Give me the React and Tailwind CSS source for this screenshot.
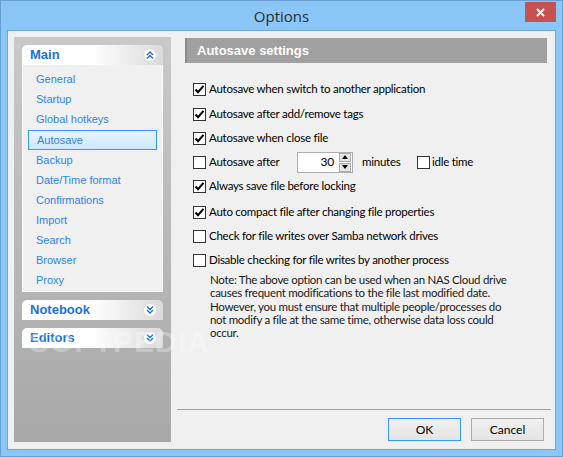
import React from 'react'

const ui = { fontFamily: 'Lato, "Open Sans", Arial, sans-serif' }
const tah = { fontFamily: '"Liberation Sans", Arial, sans-serif' }

function Check({ checked }) {
  return (
    <span className="w-[13px] h-[13px] shrink-0 border border-[#333333] bg-white flex items-center justify-center">
      {checked && (
        <svg width="11" height="11" viewBox="0 0 11 11">
          <path d="M1.5 5.5 L4 8.2 L9.5 1.8" fill="none" stroke="#000" strokeWidth="2" />
        </svg>
      )}
    </span>
  )
}

function Row({ checked, label, className = '' }) {
  return (
    <div className={`h-[24px] flex items-center gap-[3px] ${className}`}>
      <Check checked={checked} />
      <span className="text-[11.5px] tracking-[-0.25px] text-black whitespace-nowrap">{label}</span>
    </div>
  )
}

function Chevrons({ up }) {
  return (
    <span className="w-[14px] h-[14px] rounded-full bg-white border border-[#dcdcdc] flex items-center justify-center">
      <svg width="8" height="8" viewBox="0 0 8 8">
        {up ? (
          <path d="M1 4 L4 1 L7 4 M1 7.5 L4 4.5 L7 7.5" fill="none" stroke="#1c6fe0" strokeWidth="1.4" />
        ) : (
          <path d="M1 0.5 L4 3.5 L7 0.5 M1 4 L4 7 L7 4" fill="none" stroke="#1c6fe0" strokeWidth="1.4" />
        )}
      </svg>
    </span>
  )
}

function PanelHeader({ title, up }) {
  return (
    <div className="h-[20px] rounded-t-[5px] bg-gradient-to-r from-white via-white to-[#dadada] flex items-center justify-between pl-[8px] pr-[6px]">
      <span className="text-[13px] font-bold text-[#1c6fe0]" style={tah}>{title}</span>
      <Chevrons up={up} />
    </div>
  )
}

const items = ['General', 'Startup', 'Global hotkeys', 'Autosave', 'Backup', 'Date/Time format', 'Confirmations', 'Import', 'Search', 'Browser', 'Proxy']

export default function App() {
  return (
    <div className="w-[563px] h-[457px] bg-[#8ac7f8] border border-[#6a9fd2] flex flex-col relative overflow-hidden" style={ui}>
      {/* title bar */}
      <div className="h-[29px] relative flex items-center justify-center">
        <span className="text-[15px] text-[#2b2b2b] mt-[2px]" style={{ fontFamily: '"Open Sans", sans-serif' }}>Options</span>
        <div className="absolute right-[6px] top-[1px] w-[31px] h-[20px] bg-[#c75050] flex items-center justify-center">
          <svg width="9" height="9" viewBox="0 0 9 9">
            <path d="M1 1 L8 8 M8 1 L1 8" stroke="#fff" strokeWidth="2" />
          </svg>
        </div>
      </div>

      {/* client */}
      <div className="mx-[6px] h-[420px] bg-[#f0f0f0] border border-[#6fa6d8] flex">
        {/* sidebar */}
        <div className="ml-[6px] mt-[6px] w-[157px] h-[405px] bg-gradient-to-b from-[#c9c9c9] to-[#a8a8a8] px-[8px] pt-[8px] flex flex-col">
          <PanelHeader title="Main" up />
          <div className="bg-[#f0f0f0] border border-t-0 border-white pt-[4px] pb-[1px] px-[5px]" style={tah}>
            {items.map((it) => (
              <div
                key={it}
                className={`h-[20px] flex items-center pl-[8px] text-[11px] text-[#2f84f2] ${
                  it === 'Autosave' ? 'border border-[#3399ff] bg-gradient-to-b from-[#e8f4ff] to-[#cde7fe] h-[19px] mt-px pl-[7px]' : ''
                }`}
              >
                {it}
              </div>
            ))}
          </div>
          <div className="mt-[8px]">
            <PanelHeader title="Notebook" />
          </div>
          <div className="mt-[8px]">
            <PanelHeader title="Editors" />
          </div>
        </div>

        {/* right column */}
        <div className="ml-[6px] w-[374px] flex flex-col">
          <div className="flex-1 pl-[8px] pr-[4px] pt-[7px]">
            <div className="h-[25px] bg-[#a0a0a0] border-l-2 border-[#8c8c8c] flex items-center pl-[10px]">
              <span className="text-[13px] font-bold text-white" style={tah}>Autosave settings</span>
            </div>
            <div className="pl-[8px]">
              <Row checked label="Autosave when switch to another application" className="mt-[14px]" />
              <Row checked label="Autosave after add/remove tags" className="mt-px" />
              <Row checked label="Autosave when close file" />
              <div className="h-[24px] flex items-center text-[11.5px] tracking-[-0.25px]">
                <Check />
                <span className="ml-[3px] w-[88px]">Autosave after</span>
                <div className="w-[56px] h-[21px] border border-[#abadb3] bg-white flex items-center">
                  <span className="flex-1 text-right text-[12px] pr-[5px]">30</span>
                  <div className="w-[12px] h-[19px] flex flex-col gap-px mr-px">
                    <div className="flex-1 bg-[#e5e5e5] border border-[#acacac] flex items-center justify-center">
                      <svg width="6" height="4" viewBox="0 0 6 4"><path d="M0 4 L3 0 L6 4Z" fill="#000" /></svg>
                    </div>
                    <div className="flex-1 bg-[#e5e5e5] border border-[#acacac] flex items-center justify-center">
                      <svg width="6" height="4" viewBox="0 0 6 4"><path d="M0 0 L3 4 L6 0Z" fill="#000" /></svg>
                    </div>
                  </div>
                </div>
                <span className="ml-[9px] w-[55px]">minutes</span>
                <Check />
                <span className="ml-[2px]">idle time</span>
              </div>
              <Row checked label="Always save file before locking" />
              <Row checked label="Auto compact file after changing file properties" className="mt-[2px]" />
              <Row label="Check for file writes over Samba network drives" />
              <Row label="Disable checking for file writes by another process" />
              <p className="text-[11.5px] tracking-[-0.3px] leading-[13.3px] text-[#1a1a1a] pl-[17px] mt-[1px] whitespace-nowrap">
                Note: The above option can be used when an NAS Cloud drive<br />
                causes frequent modifications to the file last modified date.<br />
                However, you must ensure that multiple people/processes do<br />
                not modify a file at the same time, otherwise data loss could<br />
                occur.
              </p>
            </div>
          </div>
          <div className="h-px bg-[#a0a0a0]" />
          <div className="h-[39px] flex items-start justify-end gap-[10px] pt-[8px] pr-[7px]">
            <button className="w-[73px] h-[23px] border border-[#3399ff] bg-gradient-to-b from-[#f0f0f0] to-[#e5e5e5] text-[12px] text-black">OK</button>
            <button className="w-[73px] h-[23px] border border-[#acacac] bg-gradient-to-b from-[#f0f0f0] to-[#e5e5e5] text-[12px] text-black">Cancel</button>
          </div>
        </div>
      </div>

      {/* watermark */}
      <div className="absolute left-[28px] top-[318px] text-[30px] font-bold tracking-[1px] text-white/30 pointer-events-none" style={tah}>
        SOFTPEDIA
      </div>
    </div>
  )
}
